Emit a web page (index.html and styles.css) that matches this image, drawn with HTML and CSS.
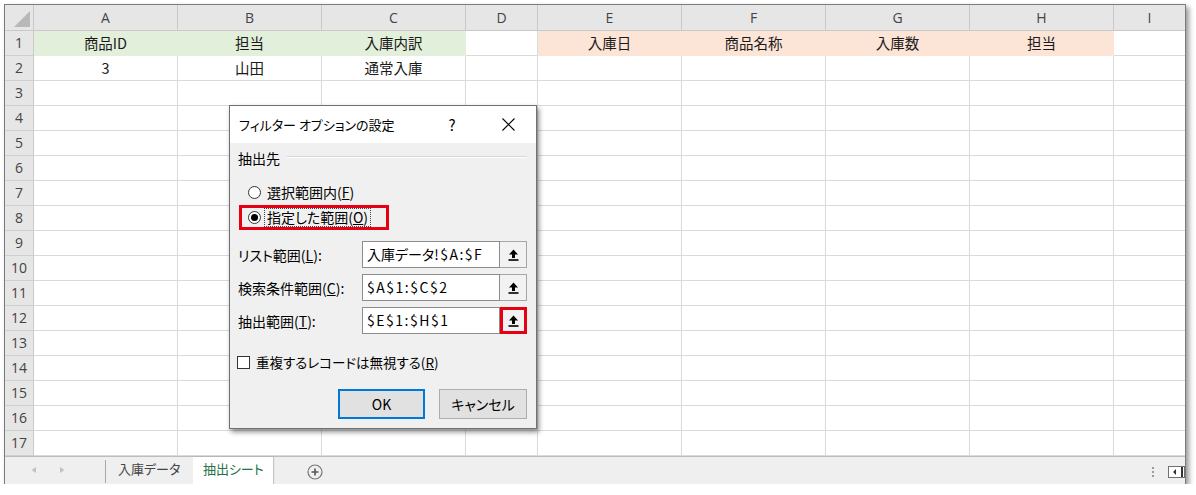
FILE: index.html
```html
<!DOCTYPE html>
<html lang="ja">

<head>
    <meta charset="UTF-8">
    <meta name="viewport" content="width=device-width, initial-scale=1.0">
    <title>フィルター オプションの設定</title>
    <link rel="stylesheet" href="styles.css">
</head>

<body>

    <div class="excel">
        <div class="sheet">
            <div class="row head">
                <div class="corner"></div>
                <div>A</div><div>B</div><div>C</div><div>D</div><div>E</div><div>F</div><div>G</div><div>H</div><div>I</div>
            </div>
            <div class="row">
                <div class="rh">1</div>
                <div class="green">商品ID</div>
                <div class="green">担当</div>
                <div class="green">入庫内訳</div>
                <div></div>
                <div class="orange">入庫日</div>
                <div class="orange">商品名称</div>
                <div class="orange">入庫数</div>
                <div class="orange">担当</div>
                <div></div>
            </div>
            <div class="row">
                <div class="rh">2</div>
                <div>3</div><div>山田</div><div>通常入庫</div><div></div><div></div><div></div><div></div><div></div><div></div>
            </div>
            <div class="row"><div class="rh">3</div><div></div><div></div><div></div><div></div><div></div><div></div><div></div><div></div><div></div></div>
            <div class="row"><div class="rh">4</div><div></div><div></div><div></div><div></div><div></div><div></div><div></div><div></div><div></div></div>
            <div class="row"><div class="rh">5</div><div></div><div></div><div></div><div></div><div></div><div></div><div></div><div></div><div></div></div>
            <div class="row"><div class="rh">6</div><div></div><div></div><div></div><div></div><div></div><div></div><div></div><div></div><div></div></div>
            <div class="row"><div class="rh">7</div><div></div><div></div><div></div><div></div><div></div><div></div><div></div><div></div><div></div></div>
            <div class="row"><div class="rh">8</div><div></div><div></div><div></div><div></div><div></div><div></div><div></div><div></div><div></div></div>
            <div class="row"><div class="rh">9</div><div></div><div></div><div></div><div></div><div></div><div></div><div></div><div></div><div></div></div>
            <div class="row"><div class="rh">10</div><div></div><div></div><div></div><div></div><div></div><div></div><div></div><div></div><div></div></div>
            <div class="row"><div class="rh">11</div><div></div><div></div><div></div><div></div><div></div><div></div><div></div><div></div><div></div></div>
            <div class="row"><div class="rh">12</div><div></div><div></div><div></div><div></div><div></div><div></div><div></div><div></div><div></div></div>
            <div class="row"><div class="rh">13</div><div></div><div></div><div></div><div></div><div></div><div></div><div></div><div></div><div></div></div>
            <div class="row"><div class="rh">14</div><div></div><div></div><div></div><div></div><div></div><div></div><div></div><div></div><div></div></div>
            <div class="row"><div class="rh">15</div><div></div><div></div><div></div><div></div><div></div><div></div><div></div><div></div><div></div></div>
            <div class="row"><div class="rh">16</div><div></div><div></div><div></div><div></div><div></div><div></div><div></div><div></div><div></div></div>
            <div class="row"><div class="rh">17</div><div></div><div></div><div></div><div></div><div></div><div></div><div></div><div></div><div></div></div>
        </div>

        <div class="tabs">
            <div class="tab-nav">
                <svg width="100" height="26" viewBox="0 0 100 26">
                    <path d="M31 10 L26.5 13 L31 16 Z" fill="#c2c2c2" />
                    <path d="M55 10 L59.5 13 L55 16 Z" fill="#c2c2c2" />
                </svg>
            </div>
            <div class="tab-sep"></div>
            <div class="tab">入庫データ</div>
            <div class="tab active">抽出シート</div>
            <div class="tab-add">
                <svg width="16" height="16" viewBox="0 0 16 16">
                    <circle cx="8" cy="8" r="7" fill="none" stroke="#777" stroke-width="1.2" />
                    <path d="M8 4.5 V11.5 M4.5 8 H11.5" stroke="#555" stroke-width="1.6" />
                </svg>
            </div>
            <div class="tab-fill"></div>
            <div class="tab-dots"><i></i><i></i><i></i></div>
            <div class="hscroll">
                <svg width="17" height="12" viewBox="0 0 17 12">
                    <rect x="0.5" y="0.5" width="16" height="11" fill="#fff" stroke="#6f6f6f" />
                    <path d="M8 3 L5 6 L8 9 Z" fill="#333" />
                    <rect x="13" y="1" width="2" height="10" fill="#333" />
                </svg>
            </div>
        </div>

        <div class="dialog">
            <div class="dlg-title">
                <span class="dlg-caption">フィルター オプションの設定</span>
                <span class="dlg-help">?</span>
                <span class="dlg-close">
                    <svg width="13" height="13" viewBox="0 0 13 13">
                        <path d="M0.5 0.5 L12.5 12.5 M12.5 0.5 L0.5 12.5" stroke="#000" stroke-width="1.1" />
                    </svg>
                </span>
            </div>
            <div class="dlg-body">
                <div class="group-title"><span>抽出先</span><i class="etch"></i></div>

                <label class="opt"><span class="radio"></span><span class="opt-text">選択範囲内(<u>F</u>)</span></label>
                <label class="opt mark"><span class="radio on"></span><span class="opt-text focus">指定した範囲(<u>O</u>)</span></label>

                <div class="field first">
                    <span class="field-label">リスト範囲(<u>L</u>):</span>
                    <span class="ref-box">入庫データ<span class="ascii">!$A:$F</span></span>
                    <span class="ref-btn"><svg width="11" height="12" viewBox="0 0 11 12"><path d="M5.5 0.5 L1 5.5 H4 V9 H7 V5.5 H10 Z" fill="#000" /><rect x="0.5" y="10.2" width="10" height="1.6" fill="#000" /></svg></span>
                </div>
                <div class="field">
                    <span class="field-label">検索条件範囲(<u>C</u>):</span>
                    <span class="ref-box"><span class="ascii">$A$1:$C$2</span></span>
                    <span class="ref-btn"><svg width="11" height="12" viewBox="0 0 11 12"><path d="M5.5 0.5 L1 5.5 H4 V9 H7 V5.5 H10 Z" fill="#000" /><rect x="0.5" y="10.2" width="10" height="1.6" fill="#000" /></svg></span>
                </div>
                <div class="field">
                    <span class="field-label">抽出範囲(<u>T</u>):</span>
                    <span class="ref-box"><span class="ascii">$E$1:$H$1</span></span>
                    <span class="ref-btn mark"><svg width="11" height="12" viewBox="0 0 11 12"><path d="M5.5 0.5 L1 5.5 H4 V9 H7 V5.5 H10 Z" fill="#000" /><rect x="0.5" y="10.2" width="10" height="1.6" fill="#000" /></svg></span>
                </div>

                <label class="check"><span class="box"></span>重複するレコードは無視する(<u>R</u>)</label>

                <div class="dlg-buttons">
                    <button class="btn default">OK</button>
                    <button class="btn">キャンセル</button>
                </div>
            </div>
        </div>
    </div>

</body>

</html>
```

FILE: styles.css
```css
body {
    margin: 0;
    background: #fff;
    font-family: "Noto Sans CJK JP", "Noto Sans", sans-serif;
}

.excel {
    position: relative;
    width: 1182px;
    height: 480px;
    margin: 4px 0 0 4px;
    border: 1px solid #7b7b7b;
    box-sizing: border-box;
    box-shadow: 3px 3px 5px rgba(0, 0, 0, 0.4);
    display: flex;
    flex-direction: column;
}

/* grid */
.row {
    display: grid;
    grid-template-columns: 29px 144px 144px 144px 72px 144px 144px 144px 144px 71px;
    height: 25px;
}

.row > div {
    box-sizing: border-box;
    border-right: 1px solid #dadada;
    border-bottom: 1px solid #dadada;
    font-size: 14.5px;
    line-height: 24px;
    text-align: center;
    color: #1a1a1a;
    white-space: nowrap;
}

.row > div:last-child {
    border-right: none;
}

.head {
    height: 26px;
    background: #e6e6e6;
}

.head > div {
    border-color: #c9c9c9;
    color: #444;
    font-family: "Open Sans", "Noto Sans", sans-serif;
    font-size: 14px;
    line-height: 25px;
}

.corner {
    position: relative;
}

.corner::after {
    content: "";
    position: absolute;
    right: 3px;
    bottom: 3px;
    width: 16px;
    height: 16px;
    background: #b8b8b8;
    clip-path: polygon(100% 0, 100% 100%, 0 100%);
}

.row > .rh {
    background: #e6e6e6;
    border-right-color: #c9c9c9;
    border-bottom-color: #cfcfcf;
    color: #444;
    font-family: "Open Sans", "Noto Sans", sans-serif;
    font-size: 14px;
}

.row > .green {
    background: #e2efda;
    border-color: #e2efda;
}

.row > .orange {
    background: #fce4d6;
    border-color: #fce4d6;
}

/* sheet tabs */
.tabs {
    flex: 1;
    display: flex;
    align-items: stretch;
    background: #efefef;
    border-top: 1px solid #bdbdbd;
    font-size: 13px;
    font-feature-settings: "palt";
    color: #444;
}

.tab-nav {
    width: 100px;
}

.tab-sep {
    width: 1px;
    margin: 3px 0 4px;
    background: #a8a8a8;
}

.tab {
    padding: 0 12px;
    line-height: 24px;
}

.tab.active {
    margin-left: 1px;
    width: 80px;
    box-sizing: border-box;
    text-align: center;
    padding: 0;
    background: #fff;
    color: #217346;
    border-bottom: 2px solid #217346;
    box-shadow: 1px 0 1px rgba(0, 0, 0, 0.18);
}

.tab-add {
    margin-left: 34px;
    display: flex;
    align-items: center;
}

.tab-fill {
    flex: 1;
}

.tab-dots {
    display: flex;
    flex-direction: column;
    justify-content: center;
    gap: 2px;
    margin-right: 14px;
}

.tab-dots i {
    width: 2px;
    height: 2px;
    background: #9a9a9a;
}

.hscroll {
    display: flex;
    align-items: center;
}

/* dialog */
.dialog {
    position: absolute;
    left: 224px;
    top: 100px;
    width: 308px;
    height: 324px;
    box-sizing: border-box;
    border: 1px solid #707070;
    background: #f0f0f0;
    box-shadow: 2px 3px 5px rgba(0, 0, 0, 0.45);
    font-size: 14px;
    font-feature-settings: "palt";
    color: #000;
    display: flex;
    flex-direction: column;
}

.dlg-title {
    height: 37px;
    background: #fff;
    display: flex;
    align-items: center;
    padding-left: 9px;
}

.dlg-caption {
    flex: 1;
    font-size: 13px;
}

.dlg-help {
    width: 20px;
    text-align: center;
    font-size: 15px;
    margin-right: 23px;
}

.dlg-close {
    width: 46px;
    margin-right: 5px;
    display: flex;
    justify-content: center;
}

.dlg-body {
    flex: 1;
    padding: 6px 9px 0 8px;
    display: flex;
    flex-direction: column;
}

.group-title {
    height: 18px;
    display: flex;
    align-items: center;
}

.etch {
    flex: 1;
    margin: -3px 0 0 7px;
    border-top: 1px solid #d6d6d6;
    border-bottom: 1px solid #fff;
}

.opt {
    display: flex;
    align-items: center;
    align-self: flex-start;
    height: 25px;
    box-sizing: border-box;
    border: 3px solid transparent;
    margin-left: 1px;
    padding-left: 6px;
}

.opt:first-of-type {
    margin-top: 13px;
}

.opt.mark {
    width: 150px;
    border-color: #e60012;
}

.radio {
    flex: none;
    width: 13px;
    height: 13px;
    box-sizing: border-box;
    border: 1px solid #333;
    border-radius: 50%;
    background: #fff;
    position: relative;
}

.radio.on::after {
    content: "";
    position: absolute;
    left: 2px;
    top: 2px;
    width: 7px;
    height: 7px;
    border-radius: 50%;
    background: #000;
}

.opt-text {
    margin-left: 6px;
    line-height: 17px;
    white-space: nowrap;
}

.opt-text.focus {
    margin-left: 3px;
    padding: 0 2px;
    border: 1px dotted #444;
}

.field {
    display: flex;
    align-items: center;
    height: 27px;
    margin-top: 6px;
}

.field.first {
    margin-top: 11px;
}

.field-label {
    width: 124px;
    white-space: nowrap;
}

.ref-box {
    width: 138px;
    height: 27px;
    box-sizing: border-box;
    border: 1px solid #8c8c8c;
    background: #fff;
    padding-left: 4px;
    line-height: 25px;
    white-space: nowrap;
    overflow: hidden;
}

.ascii {
    letter-spacing: 1.5px;
}

.ref-btn {
    width: 27px;
    height: 27px;
    box-sizing: border-box;
    border: 1px solid #a6a6a6;
    border-left: none;
    background: #f2f2f2;
    display: flex;
    align-items: center;
    justify-content: center;
}

.ref-btn.mark {
    border: 3px solid #e60012;
}

.check {
    display: flex;
    align-items: center;
    height: 18px;
    margin-top: 19px;
    font-size: 13.5px;
    white-space: nowrap;
}

.box {
    flex: none;
    width: 13px;
    height: 13px;
    box-sizing: border-box;
    border: 1px solid #333;
    background: #fff;
    margin: 0 6px 0 -1px;
}

.dlg-buttons {
    display: flex;
    justify-content: flex-end;
    gap: 14px;
    margin-top: 18px;
}

.btn {
    width: 88px;
    height: 30px;
    box-sizing: border-box;
    border: 1px solid #adadad;
    background: #e1e1e1;
    font-family: inherit;
    font-size: 14px;
    font-feature-settings: "palt";
    color: #000;
    padding: 0;
}

.btn.default {
    width: 87px;
    border: 2px solid #0078d7;
}
```
